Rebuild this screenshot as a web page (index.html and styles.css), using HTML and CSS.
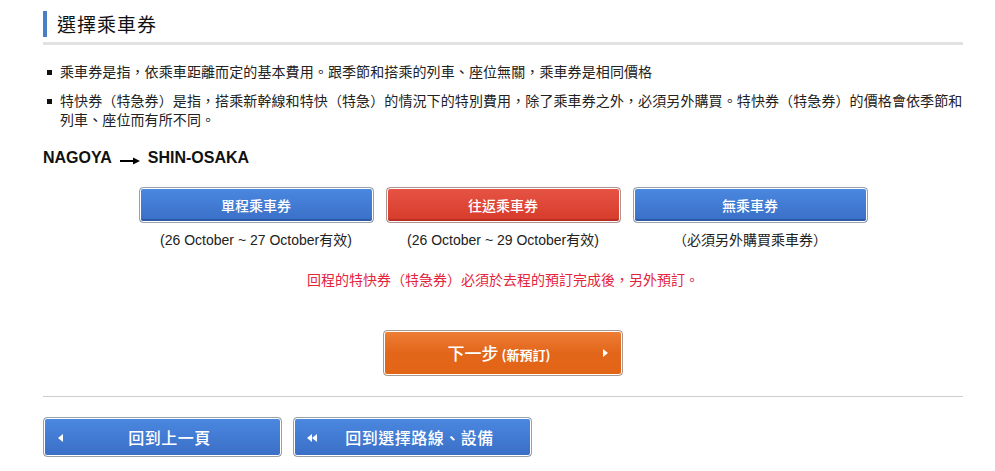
FILE: index.html
```html
<!DOCTYPE html>
<html lang="zh-Hant">
<head>
<meta charset="utf-8">
<title>選擇乘車券</title>
<link rel="stylesheet" href="styles.css">
</head>
<body>
<div class="page">
  <h1 class="title">選擇乘車券</h1>
  <ul class="notes">
    <li>乘車券是指，依乘車距離而定的基本費用。跟季節和搭乘的列車、座位無關，乘車券是相同價格</li>
    <li>特快券（特急券）是指，搭乘新幹線和特快（特急）的情況下的特別費用，除了乘車券之外，必須另外購買。特快券（特急券）的價格會依季節和列車、座位而有所不同。</li>
  </ul>
  <div class="route">
    <span>NAGOYA</span>
    <svg class="route-arrow" width="20" height="8" viewBox="0 0 20 8"><path d="M0 4H14" stroke="#000" stroke-width="2"/><path d="M13 0.5L20 4L13 7.5Z" fill="#000"/></svg>
    <span>SHIN-OSAKA</span>
  </div>
  <div class="tickets">
    <div class="ticket">
      <button class="btn btn-blue">單程乘車券</button>
      <p class="ticket-note">(26 October ~ 27 October有效)</p>
    </div>
    <div class="ticket">
      <button class="btn btn-red">往返乘車券</button>
      <p class="ticket-note">(26 October ~ 29 October有效)</p>
    </div>
    <div class="ticket">
      <button class="btn btn-blue">無乘車券</button>
      <p class="ticket-note">（必須另外購買乘車券）</p>
    </div>
  </div>
  <p class="warning">回程的特快券（特急券）必須於去程的預訂完成後，另外預訂。</p>
  <div class="next-wrap">
    <button class="btn-next"><span class="next-main">下一步</span> <span class="next-sub">(新預訂)</span><span class="tri-right"></span></button>
  </div>
  <hr class="divider">
  <div class="back-row">
    <button class="btn-back"><span class="tri-left"></span><span class="back-label">回到上一頁</span></button>
    <button class="btn-back"><span class="tri-double"><span class="tri-left small"></span><span class="tri-left small"></span></span><span class="back-label">回到選擇路線、設備</span></button>
  </div>
</div>
</body>
</html>
```

FILE: styles.css
```css
* { box-sizing: border-box; }
html, body { margin: 0; padding: 0; background: #fff; }
body {
  font-family: "Liberation Sans", Arial, "Noto Sans CJK TC", sans-serif;
  color: #222;
  text-spacing-trim: space-all;
}
.page {
  width: 920px;
  margin-left: 43px;
  padding-top: 11px;
}
.title {
  margin: 0;
  height: 26px;
  line-height: 26px;
  border-left: 4px solid #4a7fc5;
  padding-left: 10px;
  font-family: "Noto Sans CJK TC", sans-serif;
  font-size: 19px;
  font-weight: 400;
  color: #111;
  letter-spacing: 1px;
}
.title::after {
  content: "";
  display: block;
  height: 3px;
  background: #e2e2e2;
  margin-left: -14px;
  margin-top: 5px;
}
.notes {
  list-style: none;
  margin: 25px 0 0 0;
  padding: 0;
  font-family: "Noto Sans CJK TC", sans-serif;
  font-size: 14px;
  letter-spacing: 0.1px;
  line-height: 19px;
  color: #222;
}
.notes li {
  position: relative;
  padding-left: 17px;
  margin-bottom: 10px;
}
.notes li::before {
  content: "";
  position: absolute;
  left: 4px;
  top: 8px;
  width: 5px;
  height: 5px;
  background: #111;
}
.route {
  display: flex;
  align-items: center;
  margin-top: 20px;
  font-family: "Liberation Sans", Arial, sans-serif;
  font-weight: bold;
  font-size: 16px;
  color: #111;
  height: 18px;
}
.route-arrow { margin: 5px 8px 0 8px; }
.tickets {
  display: flex;
  justify-content: center;
  gap: 12px;
  margin-top: 20px;
}
.ticket {
  width: 235px;
  text-align: center;
}
.btn {
  display: block;
  width: 100%;
  height: 36px;
  border: 1px solid #9aa0a8;
  border-radius: 4px;
  padding: 0;
  color: #fff;
  font-family: "Noto Sans CJK TC", sans-serif;
  font-size: 14px;
  font-weight: 500;
  cursor: pointer;
}
.btn-blue {
  background: linear-gradient(#4b88e0, #3a6ec6);
  box-shadow: inset 0 0 0 1px #fff, inset 0 -3px 0 #2c58a6;
}
.btn-red {
  background: linear-gradient(#e65444, #d63a2a);
  border-color: #b09090;
  box-shadow: inset 0 0 0 1px #fff, inset 0 -3px 0 #b82e22;
}
.ticket-note {
  margin: 8px 0 0 0;
  font-size: 14px;
  line-height: 18px;
  color: #222;
  font-family: "Liberation Sans", Arial, "Noto Sans CJK TC", sans-serif;
}
.warning {
  margin: 22px 0 0 0;
  text-align: center;
  color: #e3243b;
  font-size: 14px;
  line-height: 18px;
  font-family: "Liberation Sans", "Noto Sans CJK TC", sans-serif;
}
.next-wrap {
  display: flex;
  justify-content: center;
  margin-top: 41px;
}
.btn-next {
  position: relative;
  width: 240px;
  height: 46px;
  border: 1px solid #a89a90;
  border-radius: 4px;
  background: linear-gradient(#ee7e36, #e2661a 50%, #e36516);
  box-shadow: inset 0 0 0 1px #fff;
  color: #fff;
  font-family: "Noto Sans CJK TC", sans-serif;
  padding: 0 8px 2px 0;
  cursor: pointer;
}
.next-main { font-size: 17px; font-weight: 500; }
.next-sub { font-size: 13px; font-weight: bold; }
.tri-right {
  position: absolute;
  right: 14px;
  top: 18px;
  width: 0; height: 0;
  border-top: 4px solid transparent;
  border-bottom: 4px solid transparent;
  border-left: 5px solid #fff;
}
.divider {
  border: 0;
  height: 1px;
  background: #cfcfcf;
  margin: 20px 0 0 0;
}
.back-row {
  display: flex;
  gap: 11px;
  margin-top: 20px;
}
.btn-back {
  position: relative;
  width: 239px;
  height: 40px;
  border: 1px solid #9aa0a8;
  border-radius: 4px;
  background: linear-gradient(#4b88e0, #3a6ec6);
  box-shadow: inset 0 0 0 1px #fff;
  color: #fff;
  font-family: "Noto Sans CJK TC", sans-serif;
  font-size: 16px;
  font-weight: 500;
  padding: 0 0 0 14px;
  cursor: pointer;
}
.tri-left {
  position: absolute;
  left: 14px;
  top: 16px;
  width: 0; height: 0;
  border-top: 4px solid transparent;
  border-bottom: 4px solid transparent;
  border-right: 5px solid #fff;
}
.tri-double {
  position: absolute;
  left: 13px;
  top: 16px;
  display: flex;
}
.tri-double .tri-left.small {
  position: static;
  border-right-width: 5px;
}
.back-label { letter-spacing: 0.5px; }
```
